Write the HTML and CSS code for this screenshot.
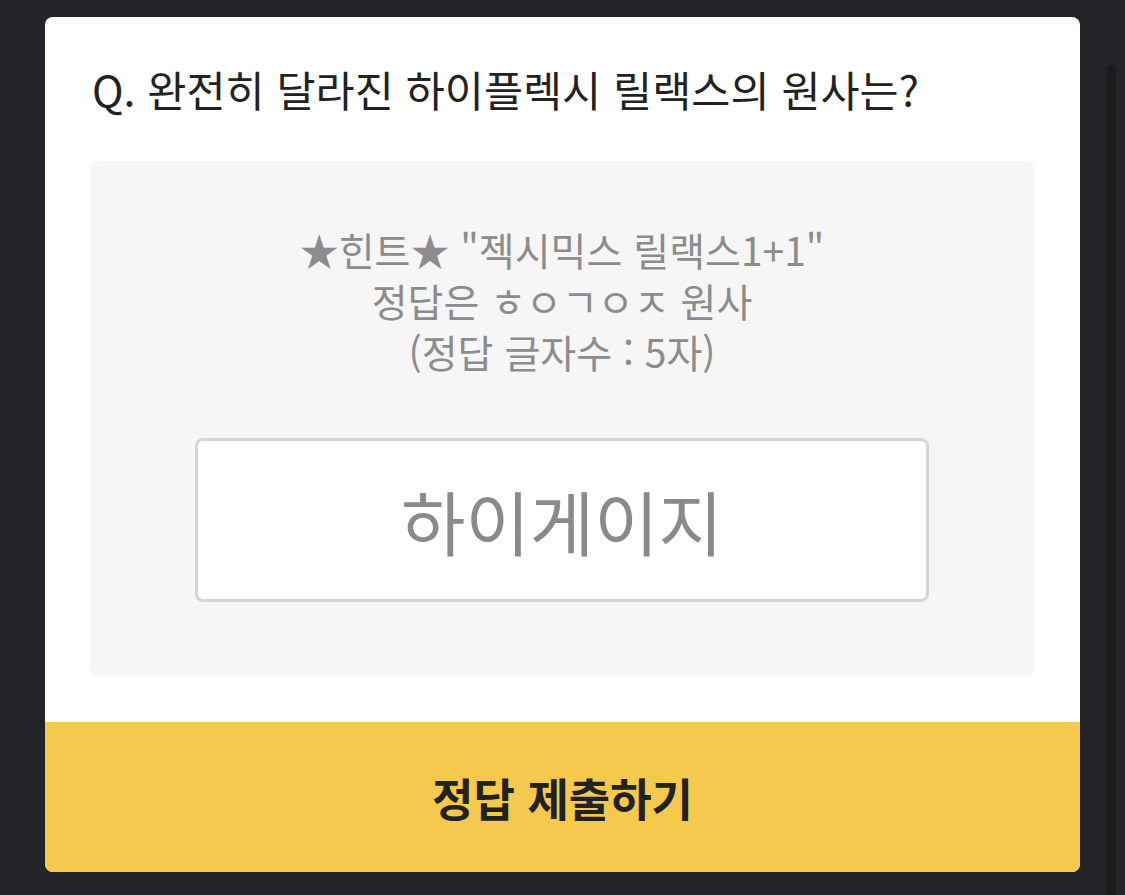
FILE: index.html
```html
<!DOCTYPE html>
<html lang="ko">
<head>
<meta charset="utf-8">
<link rel="stylesheet" href="styles.css">
</head>
<body>
<div class="scrollbar"></div>
<div class="modal">
  <div class="content">
    <h1 class="question">Q. 완전히 달라진 하이플렉시 릴랙스의 원사는?</h1>
    <div class="quiz-box">
      <p class="hint">★힌트★ "젝시믹스 릴랙스1+1"<br>정답은 ㅎㅇㄱㅇㅈ 원사<br>(정답 글자수 : 5자)</p>
      <div class="answer">하이게이지</div>
    </div>
  </div>
  <button class="submit">정답 제출하기</button>
</div>
</body>
</html>
```

FILE: styles.css
```css
html, body {
  margin: 0;
  padding: 0;
  background: #232427;
  height: 895px;
  overflow: hidden;
}
body {
  font-family: "Noto Sans CJK KR", "Noto Sans", sans-serif;
  position: relative;
}
.scrollbar {
  position: absolute;
  left: 1107px;
  top: 65px;
  width: 9px;
  height: 830px;
  background: #1b1b1c;
  border-radius: 5px 5px 0 0;
}
.modal {
  margin: 17px 0 0 45px;
  width: 1035px;
  height: 855px;
  background: #fff;
  border-radius: 8px;
  overflow: hidden;
  display: flex;
  flex-direction: column;
}
.content {
  flex: 1;
  padding: 0 46px 0 45px;
}
.question {
  margin: 0;
  padding-top: 51px;
  height: 42px;
  font-size: 42.5px;
  font-weight: 400;
  line-height: 42px;
  color: #222;
  padding-left: 2px;
  white-space: nowrap;
}
.quiz-box {
  margin-top: 51px;
  height: 516px;
  background: #f6f6f6;
  border-radius: 8px;
  display: flex;
  flex-direction: column;
  align-items: center;
}
.hint {
  margin: 0;
  padding-top: 63px;
  font-size: 39px;
  line-height: 51px;
  color: #8c8c8c;
  text-align: center;
  white-space: nowrap;
}
.answer {
  margin-top: 61px;
  width: 728px;
  height: 158px;
  border: 3px solid #d6d6d6;
  border-radius: 8px;
  background: #fff;
  display: flex;
  align-items: center;
  justify-content: center;
  font-size: 70px;
  color: #8a8a8a;
}
.submit {
  height: 150px;
  border: none;
  margin: 0;
  background: #f5c94e;
  font-family: inherit;
  font-size: 45px;
  font-weight: 700;
  color: #222;
  padding: 0;
}
```
